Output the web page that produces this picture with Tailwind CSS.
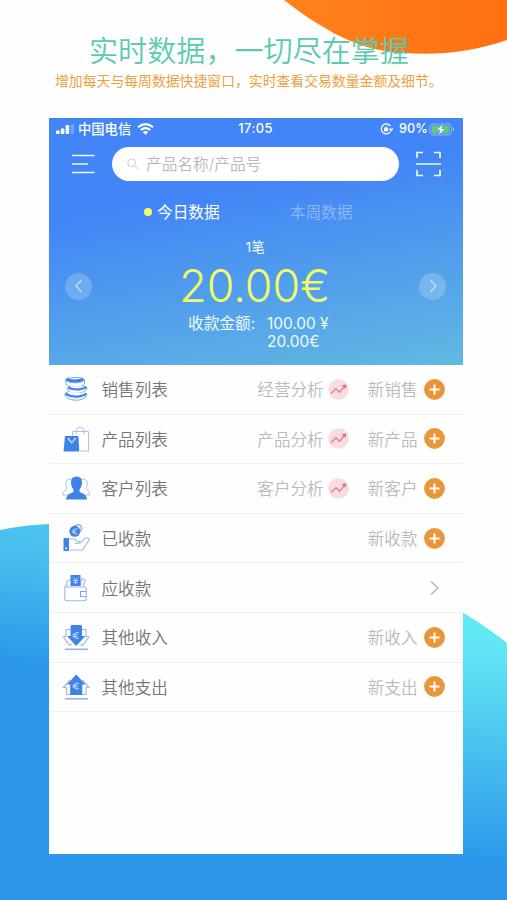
<!DOCTYPE html>
<html lang="zh-CN">
<head>
<meta charset="utf-8">
<title>实时数据</title>
<script src="https://cdn.jsdelivr.net/npm/@tailwindcss/browser@4"></script>
</head>
<body class="bg-white">
<div class="relative w-[507px] h-[900px] overflow-hidden bg-[#fefefe] font-['Inter','Noto_Sans_CJK_SC',sans-serif]">
  <svg class="absolute inset-0" width="507" height="900" viewBox="0 0 507 900">
    <defs>
      <linearGradient id="o" x1="0" y1="0" x2="1" y2="0"><stop offset="0" stop-color="#ff821c"/><stop offset="1" stop-color="#ff7010"/></linearGradient>
      <linearGradient id="l" gradientUnits="userSpaceOnUse" x1="35" y1="522" x2="10" y2="665"><stop offset="0" stop-color="#4dc4ef"/><stop offset=".25" stop-color="#49bdee"/><stop offset="1" stop-color="#2b96ea"/></linearGradient>
      <linearGradient id="r" gradientUnits="userSpaceOnUse" x1="490" y1="618" x2="478" y2="865"><stop offset="0" stop-color="#62ebf6"/><stop offset=".2" stop-color="#5de0f4"/><stop offset="1" stop-color="#2b96ea"/></linearGradient>
    </defs>
    <path d="M284 0C315 24 350 46 385 51C425 56 463 55 507 40V0Z" fill="url(#o)"/>
    <path d="M0 530Q24 525 49 524V900H0Z" fill="url(#l)"/>
    <path d="M462 612Q487 627 507 643V900H462Z" fill="url(#r)"/>
    <path d="M48 853H463V900H48Z" fill="#2b96ea"/>
  </svg>

  <div class="relative h-[118px] pt-[33px]">
    <h1 class="pl-[89px] text-[29.1px] leading-[38px] font-[350] text-[#5bcbb0] whitespace-nowrap">实时数据，一切尽在掌握</h1>
    <p class="pl-[55px] text-[13.85px] leading-[21px] text-[#eca13f] whitespace-nowrap">增加每天与每周数据快捷窗口，实时查看交易数量金额及细节。</p>
  </div>

  <main class="relative ml-[48.5px] w-[414px] h-[736px] bg-[#fefefe]">
    <header class="h-[247px] bg-linear-[170deg,#4285f6_0%,#4285f6_32%,#61b9e1_100%] text-white">
      <div class="h-[22px] flex items-center pl-[7px] pr-[6px] text-[12.6px] leading-[22px]">
        <div class="w-[183.500px] flex items-center">
          <svg width="19" height="10" viewBox="0 0 19 10" fill="#fff"><rect y="6.5" width="3.6" height="3.5" rx="1"/><rect x="4.8" y="4.5" width="3.6" height="5.5" rx="1"/><rect x="9.6" y="1" width="3.6" height="9" rx="1"/><rect x="14.6" width="3.4" height="10" rx="1" opacity=".25"/></svg>
          <span class="ml-[3.500px] text-[13.3px] font-medium">中国电信</span>
          <svg class="ml-[6px]" width="17" height="12" viewBox="0 0 17 12" fill="none" stroke="#fff" stroke-width="2.1"><path d="M1 4.3Q8.500-2 16 4.300M3.700 7Q8.500 3.200 13.300 7"/><path d="M8.500 11.800L5.700 9Q8.500 6.800 11.300 9Z" fill="#fff" stroke="none"/></svg>
        </div>
        <span class="w-[142px] pl-[.5px] text-[12.800px] tracking-[.45px] font-medium">17:05</span>
        <svg class="ml-[1px]" width="13" height="12" viewBox="0 0 13 12" fill="none" stroke="#fff" stroke-width="1.3"><path d="M10.500 3.200A5 5 0 1 0 10.600 8.500"/><path d="M9.500 5.500L11.400 7.500L12.700 5"/><rect x="4" y="5.200" width="4.200" height="3.200" fill="#fff" stroke="none"/><path d="M4.900 5.500V4.600Q6.100 2.800 7.300 4.600V5.500" stroke-width="1"/></svg>
        <span class="ml-[6px] w-[30px] text-[12.6px] tracking-[.2px] font-medium">90%</span>
        <svg width="28" height="13" viewBox="0 0 28 13"><rect x=".7" y="1" width="22" height="11" rx="3.500" fill="none" stroke="#fff" stroke-opacity=".4"/><rect x="2.300" y="2.500" width="18.500" height="8" rx="2" fill="#66c77c"/><path d="M24 4.300Q26.500 6.500 24 8.700Z" fill="#fff" opacity=".5"/><path d="M14 1L7.500 7H11L9.800 12L16.300 5.700H12.700Z" fill="#fff" stroke="#4d9ec0" stroke-width=".6"/></svg>
      </div>
      <div class="h-[48px] flex items-center pl-[23px] pr-[21.500px]">
        <svg width="23" height="20" viewBox="0 0 23 20" stroke="#eef5ff" stroke-width="1.600"><path d="M0 1.500H22.500M0 10H16M0 18.500H22.500"/></svg>
        <div class="ml-[17.500px] w-[287px] h-[34px] rounded-full bg-white flex items-center">
          <svg class="ml-[15px]" width="12" height="12" viewBox="0 0 12 12" fill="none" stroke="#c8c8c8" stroke-width="1"><circle cx="4.600" cy="4.800" r="3.900"/><path d="M7.400 7.800L11 11"/></svg>
          <span class="ml-[7px] pt-[2px] text-[15.700px] leading-[24px] font-[350] text-[#b8b8b8]">产品名称/产品号</span>
        </div>
        <svg class="ml-auto" width="25" height="26" viewBox="0 0 25 26" fill="none" stroke="#eef8ff" stroke-width="1.700"><path d="M1 7V1.500H7M18 1.500H24V7M1 19V24.500H7M18 24.500H24V19M0 13H25"/></svg>
      </div>
      <div class="h-[46px] flex items-center pt-[3px] pl-[95px] text-[15.700px] leading-[24px]">
        <i class="size-[8px] shrink-0 -mt-[2px] rounded-full bg-[#f6fd62]"></i>
        <span class="ml-[5.500px]">今日数据</span>
        <span class="ml-[70px] font-[350] text-white/40">本周数据</span>
      </div>
      <div class="h-[26px] text-center text-[13.200px] leading-[26px] tracking-[.5px]">1笔</div>
      <div class="h-[52px] flex items-center justify-between pl-[16.500px] pr-[16px]">
        <span class="size-[27px] rounded-full bg-white/20 grid place-items-center"><svg width="8" height="14" viewBox="0 0 8 14" fill="none" stroke="#c9e3fb" stroke-width="1.200"><path d="M6.500 1L1 7L6.500 13"/></svg></span>
        <span class="-ml-[2px] text-[44.800px] leading-[52px] font-[350] text-[#f3fb6a] whitespace-nowrap">20.00€</span>
        <span class="size-[27px] rounded-full bg-white/20 grid place-items-center"><svg width="8" height="14" viewBox="0 0 8 14" fill="none" stroke="#c9e3fb" stroke-width="1.200"><path d="M1.500 1L7 7L1.500 13"/></svg></span>
      </div>
      <div class="flex pt-[3px] pl-[139.500px] text-[15.400px] leading-[18px] text-[#f0faff]">
        <span class="w-[79px] text-[15.700px]">收款金额:</span>
        <div class="whitespace-nowrap">100.00 ¥<br>20.00€</div>
      </div>
    </header>

    <svg class="hidden">
      <symbol id="trend" viewBox="0 0 21 21"><circle cx="10.500" cy="10.500" r="10.300" fill="#fadcde"/><path d="M3 14.500L8 9.800L11.500 13.200L17 7" fill="none" stroke="#d98590" stroke-width="1.400"/><path d="M13.500 6.300L18.300 5.500L17.800 9.800Z" fill="#d4727f"/></symbol>
      <symbol id="plus" viewBox="0 0 21 21"><circle cx="10.500" cy="10.500" r="10.400" fill="#e99638"/><path d="M5.500 10.500H15.500M10.500 5.500V15.500" stroke="#fff" stroke-width="1.900"/></symbol>
    </svg>

    <ul class="text-[16.600px] leading-[24px] font-[350] text-[#757575] [&_span]:pt-[2px]">
      <li class="h-[49.600px] border-b border-[#efefef] flex items-center pl-[13px] pr-[17.500px]">
        <svg class="mr-[12px]" width="28" height="28" viewBox="0 0 28 28" fill="none" stroke="#6d9fea" stroke-width=".9"><path d="M3.500 5Q3 10 6.500 11.500Q14 13.500 20.500 11Q23.500 9.500 22.500 5" fill="#fff"/><path d="M3.500 4.800Q5 2.500 13 2.500Q21 2.500 22.500 4.800Q21 7.800 13 7.800Q5 7.800 3.500 4.800Z" fill="#fff"/><path d="M4.500 4Q8 6 13 6Q18 6 21.500 4" stroke="#3f82e8" stroke-width="2.800"/><path d="M20.500 11.200Q25.500 11 25 14Q22 18.500 12 18Q4.500 17.500 6 12" fill="#fff"/><path d="M6 12.500Q11 15 17 14.300Q21.500 13.700 24.500 12.300" stroke="#3f82e8" stroke-width="2.200"/><path d="M6.500 17Q1.500 17.500 3.500 21.500Q8 26 17.500 25Q25 23.500 24.500 18" fill="#fff"/><path d="M3.500 18.800Q9 22.300 16 21.600Q21.500 21 24.300 18.500" stroke="#3f82e8" stroke-width="2.300"/></svg>
        <span>销售列表</span>
        <span class="ml-auto text-[#bababa]">经营分析</span><svg class="ml-[4.500px]" width="21" height="21"><use href="#trend"/></svg>
        <span class="ml-[18.500px] text-[#bababa]">新销售</span><svg class="ml-[6.500px]" width="21" height="21"><use href="#plus"/></svg>
      </li>
      <li class="h-[49.600px] border-b border-[#efefef] flex items-center pl-[13px] pr-[17.500px]">
        <svg class="mr-[12px]" width="28" height="28" viewBox="0 0 28 28" fill="none"><g stroke="#a9c4ef"><path d="M10.500 11V6.500H26.500V26H18"/><path d="M14 9.500V6Q14.500 2 18 2Q21.500 2 22 6V9.500"/></g><path d="M3 11H16.300L17.300 26.500H1.500Z" fill="#3f82e8"/><path d="M6.500 14L9.700 17.700L13 14" stroke="#c7dcfa" stroke-width="1.300"/><path d="M5.700 13.500H7.300M12.200 13.500H13.800" stroke="#fff" stroke-width="1.200"/></svg>
        <span>产品列表</span>
        <span class="ml-auto text-[#bababa]">产品分析</span><svg class="ml-[4.500px]" width="21" height="21"><use href="#trend"/></svg>
        <span class="ml-[18.500px] text-[#bababa]">新产品</span><svg class="ml-[6.500px]" width="21" height="21"><use href="#plus"/></svg>
      </li>
      <li class="h-[49.600px] border-b border-[#efefef] flex items-center pl-[13px] pr-[17.500px]">
        <svg class="mr-[12px]" width="28" height="28" viewBox="0 0 28 28"><g fill="#fff" stroke="#a9c4ef"><path d="M10 6Q6 3.500 4 7Q3 9.500 4.500 12.500Q5 14.500 4 16Q.5 17 .6 21H8"/><path d="M19 6Q23 3.500 25 7Q26 9.500 24.500 12.500Q24 14.500 25 16Q28.200 17 28 21H20"/></g><path d="M14.500 2.500Q20.500 2.500 20 9Q19.800 13 17.500 15.500Q17 18 19 18.700Q24.500 20 25 25.500H4Q4.500 20 10 18.700Q12 18 11.500 15.500Q9.200 13 9 9Q8.500 2.500 14.500 2.500Z" fill="#3f82e8"/></svg>
        <span>客户列表</span>
        <span class="ml-auto text-[#bababa]">客户分析</span><svg class="ml-[4.500px]" width="21" height="21"><use href="#trend"/></svg>
        <span class="ml-[18.500px] text-[#bababa]">新客户</span><svg class="ml-[6.500px]" width="21" height="21"><use href="#plus"/></svg>
      </li>
      <li class="h-[49.600px] border-b border-[#efefef] flex items-center pl-[13px] pr-[17.500px]">
        <svg class="mr-[12px]" width="28" height="28" viewBox="0 0 28 28" fill="none"><path d="M13 1.800Q16-.3 18.500 1.500Q20.500 4 18.500 7.500" stroke="#8eb2ec" stroke-width="1.500"/><circle cx="12.800" cy="7.300" r="5.500" fill="#3f82e8"/><path d="M15.500 5Q11.500 3.800 11.500 7.400Q11.500 11 15.500 9.800M9.800 6.700H14M9.800 8.300H14" stroke="#c7dcfa" stroke-width=".9"/><path d="M1.500 14H7V27H1.500Z" fill="#3f82e8"/><path d="M3.500 23.500H5V25.300H3.500Z" fill="#fff"/><path d="M7.500 15H12Q14 15 14.500 17.500H17.500Q18 19.500 16 19.500H12.500M17.500 19.500L23.500 14Q28.200 13 26.800 16.500L20.500 26H7.500" stroke="#9dbbec" stroke-width="1.100"/></svg>
        <span>已收款</span>
        <span class="ml-auto text-[#bababa]">新收款</span><svg class="ml-[6.500px]" width="21" height="21"><use href="#plus"/></svg>
      </li>
      <li class="h-[49.600px] border-b border-[#efefef] flex items-center pl-[13px] pr-[17.500px]">
        <svg class="mr-[12px]" width="28" height="28" viewBox="0 0 28 28" fill="none" stroke="#9dbbec" stroke-width="1.100"><path d="M5.500 12L4.500 7L9 5.500M18 12L20 4.500L23.500 6.500L21 12.500"/><path d="M8.500 1H18.500V12H8.500Z" fill="#3f82e8" stroke="none"/><path d="M11 3.500L13.500 6.500L16 3.500M13.500 6.500V10M11 6.500H16M11 8.500H16" stroke="#c7dcfa" stroke-width=".9"/><path d="M4 11Q2.800 12 2.800 14V24.500Q2.800 26.800 5 26.800H22Q24.300 26.800 24.300 24.500V15.500Q24.300 13 22 13H5Q3.300 13 3.500 11.500"/><path d="M24.500 17.500H18.500V22.500H24.500" stroke="#7aa5e8"/></svg>
        <span>应收款</span>
        <svg class="ml-auto mr-[5px]" width="11" height="16" viewBox="0 0 11 16" fill="none" stroke="#c3c3c3" stroke-width="1.800"><path d="M2 1.500L9 8L2 14.500"/></svg>
      </li>
      <li class="h-[49.600px] border-b border-[#efefef] flex items-center pl-[13px] pr-[17.500px]">
        <svg class="mr-[12px]" width="28" height="28" viewBox="0 0 28 28" fill="none"><path d="M8.500 6.500H4V13L1.500 14L7.500 22.500L10 21M20 6.500H24V13L27 14L20.500 22.500L18.500 21" stroke="#9dbbec" stroke-width="1.200"/><path d="M8.500 3.500Q8.500 2 10 2H18.500Q20 2 20 3.500V13H23.500L14.200 23L5 13H8.500Z" fill="#3f82e8"/><path d="M17 10Q12 8.500 12 12.500Q12 16.500 17 15M10.500 11.700H15.500M10.500 13.400H15.500" stroke="#d8e7fc" stroke-width=".9"/><path d="M3 26.300H26" stroke="#8bb0ec" stroke-width="1.500"/></svg>
        <span>其他收入</span>
        <span class="ml-auto text-[#bababa]">新收入</span><svg class="ml-[6.500px]" width="21" height="21"><use href="#plus"/></svg>
      </li>
      <li class="h-[49.600px] border-b border-[#efefef] flex items-center pl-[13px] pr-[17.500px]">
        <svg class="mr-[12px]" width="28" height="28" viewBox="0 0 28 28" fill="none"><path d="M8 7L1.500 14.500H4.500V21.500H9M20.500 7L27 14.500H24V21.500H19.500" stroke="#9dbbec" stroke-width="1.200"/><path d="M14.200 1.500L23.500 11.500H20.300V22H8.200V11.500H5Z" fill="#3f82e8"/><path d="M17 10.500Q12 9 12 13Q12 17 17 15.500M10.500 12.200H15.500M10.500 13.900H15.500" stroke="#d8e7fc" stroke-width=".9"/><path d="M3 25.800H26" stroke="#8bb0ec" stroke-width="1.500"/></svg>
        <span>其他支出</span>
        <span class="ml-auto text-[#bababa]">新支出</span><svg class="ml-[6.500px]" width="21" height="21"><use href="#plus"/></svg>
      </li>
    </ul>
  </main>
</div>
</body>
</html>
